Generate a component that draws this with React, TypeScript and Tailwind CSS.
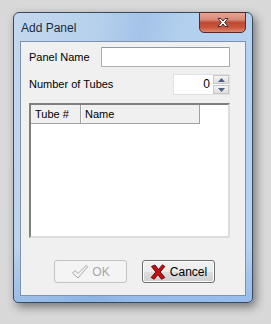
import React from 'react'

// Windows 7 style "Add Panel" dialog
const uiFont = { fontFamily: '"Liberation Sans", Arial, sans-serif' }

function CloseGlyph() {
  return (
    <svg width="14" height="11" viewBox="0 0 14 11">
      <path
        d="M2 1.5 L5 1.5 L7 4 L9 1.5 L12 1.5 L8.7 5.5 L12 9.5 L9 9.5 L7 7 L5 9.5 L2 9.5 L5.3 5.5 Z"
        fill="#ffffff"
        stroke="#4a2a2a"
        strokeWidth="1"
        strokeLinejoin="round"
      />
    </svg>
  )
}

function CheckGlyph() {
  return (
    <svg width="18" height="16" viewBox="0 0 18 16">
      <path
        d="M1.5 9 L4 6.5 L7 9.5 L15 1.5 L16.5 3 L7 14 Z"
        fill="#f4f4f4"
        stroke="#a8a8a8"
        strokeWidth="1"
        strokeLinejoin="round"
      />
    </svg>
  )
}

function CrossGlyph() {
  return (
    <svg width="16" height="16" viewBox="0 0 16 16">
      <path
        d="M1.5 2.5 L5 1 L8.5 5.5 L12.5 0.8 L14.8 2.5 L10.2 8 L14.8 13.5 L11.5 15.2 L8 10.6 L4.2 15.2 L1.2 13.5 L5.8 8 Z"
        fill="#c41010"
        stroke="#6e0606"
        strokeWidth="1"
        strokeLinejoin="round"
      />
    </svg>
  )
}

export default function App() {
  return (
    <div className="w-[271px] h-[324px] bg-[#d8d8d8] pt-[12px] pl-[13px] overflow-hidden" style={uiFont}>
      {/* window */}
      <div className="relative w-[240px] h-[291px] rounded-t-[6px] rounded-b-[5px] border border-[#3b4b5d] shadow-[3px_4px_10px_rgba(0,0,0,0.45)] bg-[linear-gradient(180deg,rgba(255,255,255,0)_0%,rgba(255,255,255,0)_80%,rgba(110,160,225,0.45)_100%),linear-gradient(100deg,#c3d8ee_0%,#b6d0ec_30%,#a3c3e8_45%,#b4d0ef_60%,#b6d3f1_100%)] flex flex-col">
        {/* title bar */}
        <div className="h-[28px] flex items-center pl-[7px] pt-[1px]">
          <span className="text-[12px] text-[#1b2b3c] leading-none">Add Panel</span>
        </div>
        {/* close button */}
        <div className="absolute top-[-1px] right-[6px] w-[47px] h-[21px] rounded-b-[5px] border border-[#5a2a2a] bg-[linear-gradient(180deg,#e8a493_0%,#d88a78_35%,#c14a33_50%,#c8543c_75%,#dc8b6e_100%)] flex items-center justify-center">
          <CloseGlyph />
        </div>
        {/* client area */}
        <div className="flex-1 mx-[6px] mb-[6px] border border-[#7d93ab] bg-[#f0f0f0] flex flex-col pl-[8px] pt-[5px] text-[11px] text-black">
          <div className="w-[201px] flex items-center h-[20px]">
            <span className="w-[72px] leading-none">Panel Name</span>
            <div className="w-[129px] h-[20px] bg-white border border-[#abadb3] border-t-[#8e9aa8] rounded-[1px]" />
          </div>
          <div className="w-[201px] flex items-center h-[21px] mt-[7px]">
            <span className="leading-none">Number of Tubes</span>
            <div className="ml-auto w-[57px] h-[21px] bg-white border border-[#dde1e6] flex">
              <div className="flex-1 text-right pr-[3px] text-[12px] leading-[19px]">0</div>
              <div className="w-[16px] flex flex-col gap-[1px]">
                <div className="flex-1 bg-[linear-gradient(180deg,#f4f4f4,#dedede)] border border-[#c8c8c8] flex items-center justify-center">
                  <svg width="7" height="4" viewBox="0 0 7 4"><path d="M0 4 L3.5 0 L7 4 Z" fill="#4d6185" /></svg>
                </div>
                <div className="flex-1 bg-[linear-gradient(180deg,#f4f4f4,#dedede)] border border-[#c8c8c8] flex items-center justify-center">
                  <svg width="7" height="4" viewBox="0 0 7 4"><path d="M0 0 L7 0 L3.5 4 Z" fill="#4d6185" /></svg>
                </div>
              </div>
            </div>
          </div>
          {/* list view */}
          <div className="mt-[8px] w-[201px] h-[135px] border-2 border-t-[#7f7f7f] border-l-[#7f7f7f] border-r-[#dcdcdc] border-b-[#dcdcdc] bg-white">
            <div className="w-[169px] h-[19px] flex bg-[#f0f0f0] border-r border-b border-[#a0a0a0]">
              <div className="w-[50px] h-full flex items-center pl-[4px] border-r border-[#a0a0a0]">Tube #</div>
              <div className="h-full flex items-center pl-[3px] border-l border-white">Name</div>
            </div>
          </div>
          {/* buttons */}
          <div className="flex mt-[22px] pl-[25px] gap-[15px]">
            <div className="w-[73px] h-[23px] rounded-[3px] border border-[#c3c3c3] bg-[#f4f4f4] flex items-center justify-center gap-[3px] text-[#a6a6a6] text-[12px]">
              <CheckGlyph />
              <span className="leading-none">OK</span>
            </div>
            <div className="w-[73px] h-[23px] rounded-[3px] border border-[#707070] bg-[linear-gradient(180deg,#f2f2f2_0%,#ebebeb_50%,#dddddd_51%,#cfcfcf_100%)] shadow-[inset_0_0_0_1px_#fbfbfb] flex items-center justify-center gap-[4px] text-[12px]">
              <CrossGlyph />
              <span className="leading-none">Cancel</span>
            </div>
          </div>
        </div>
      </div>
    </div>
  )
}
